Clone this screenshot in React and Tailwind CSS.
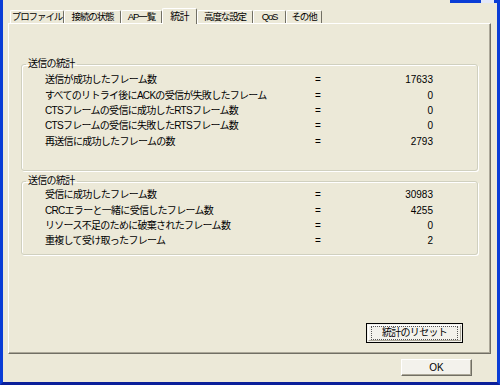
import React from "react";

const font = "font-['Liberation_Sans','Noto_Sans_CJK_JP',sans-serif]";

const tabs = [
  { label: "プロファイル", w: "w-[54px]" },
  { label: "接続の状態", w: "w-[57px]" },
  { label: "AP一覧", w: "w-[41px]" },
  { label: "統計", w: "w-[35px]", active: true },
  { label: "高度な設定", w: "w-[56px]" },
  { label: "QoS", w: "w-[33px]" },
  { label: "その他", w: "w-[36px]" },
];

const sent = [
  ["送信が成功したフレーム数", "17633"],
  ["すべてのリトライ後にACKの受信が失敗したフレーム", "0"],
  ["CTSフレームの受信に成功したRTSフレーム数", "0"],
  ["CTSフレームの受信に失敗したRTSフレーム数", "0"],
  ["再送信に成功したフレームの数", "2793"],
];

const recv = [
  ["受信に成功したフレーム数", "30983"],
  ["CRCエラーと一緒に受信したフレーム数", "4255"],
  ["リソース不足のために破棄されたフレーム数", "0"],
  ["重複して受け取ったフレーム", "2"],
];

const StatRow = ({ label, value }) => (
  <div className="flex items-center h-[15.4px] leading-[15px]">
    <span className="w-[291px] pl-[23px] whitespace-nowrap overflow-hidden tracking-[-0.7px]">{label}</span>
    <span className="w-[10px] text-center">=</span>
    <span className="w-[110px] text-right">{value}</span>
  </div>
);

const Group = ({ title, rows, className }) => (
  <fieldset className={`border border-[#D0D0BF] rounded-[3px] shadow-[inset_1px_1px_0_#fff,1px_1px_0_#fff] ${className}`}>
    <legend className="ml-[4px] px-[2px] leading-[12px] tracking-[-0.7px]">{title}</legend>
    {rows.map(([l, v]) => (
      <StatRow key={l} label={l} value={v} />
    ))}
  </fieldset>
);

const App = () => {
  return (
    <div className={`relative w-[500px] h-[385px] bg-[#ECE9D8] border-l-[3px] border-r-[3px] border-b-[3px] border-[#0A3DD6] border-b-[#0A1F9A] flex flex-col text-[10px] text-black ${font}`}>
      <div className="absolute top-0 right-[-3px] w-[50px] h-[3px] bg-[#0A3DD6] flex justify-end pr-[6px]">
        <div className="w-[13px] h-[3px] bg-[#E3E8F8]" />
      </div>

      <div className="flex items-end h-[23px] pl-[7px]">
        {tabs.map((t) =>
          t.active ? (
            <div
              key={t.label}
              className={`${t.w} h-[16px] -mb-px relative z-10 bg-[#ECE9D8] border-t border-l border-white border-r border-r-[#716F64] rounded-t-[2px] flex items-center justify-center tracking-[-0.7px]`}
            >
              {t.label}
            </div>
          ) : (
            <div
              key={t.label}
              className={`${t.w} h-[13px] bg-[#ECE9D8] border-t border-l border-white border-r border-r-[#716F64] rounded-t-[2px] flex items-center justify-center whitespace-nowrap overflow-hidden text-[9.5px] tracking-[-1.1px]`}
            >
              {t.label}
            </div>
          )
        )}
      </div>

      <div className="ml-[5px] mr-[6px] h-[331px] border-t border-l border-white border-r border-b border-r-[#716F64] border-b-[#716F64] shadow-[inset_-1px_-1px_0_#ACA899] flex flex-col px-[12px] pt-[34px]">
        <Group title="送信の統計" rows={sent} className="h-[113px] pt-[2px]" />
        <Group title="送信の統計" rows={recv} className="h-[80px] mt-[4px] pt-0" />
        <div className="mt-auto mb-[10px] flex justify-end pr-[15px]">
          <button className="w-[97px] h-[20px] border border-black bg-[#F3F2EC] p-px">
            <div className="w-full h-full border-t border-l border-white border-r border-b border-r-[#ACA899] border-b-[#ACA899] flex items-center justify-center">
              <div className="w-[85px] h-[12px] outline outline-1 outline-dotted outline-[#555] flex items-center justify-center tracking-[-0.7px] leading-[12px]">
                統計のリセット
              </div>
            </div>
          </button>
        </div>
      </div>

      <div className="flex justify-end pr-[25px] mt-[5px]">
        <button className="w-[71px] h-[17px] bg-[#F3F2EC] border-t border-l border-white border-r border-b border-r-[#716F64] border-b-[#716F64] shadow-[inset_-1px_-1px_0_#ACA899] flex items-center justify-center leading-[12px]">
          OK
        </button>
      </div>
    </div>
  );
};

export default App;
